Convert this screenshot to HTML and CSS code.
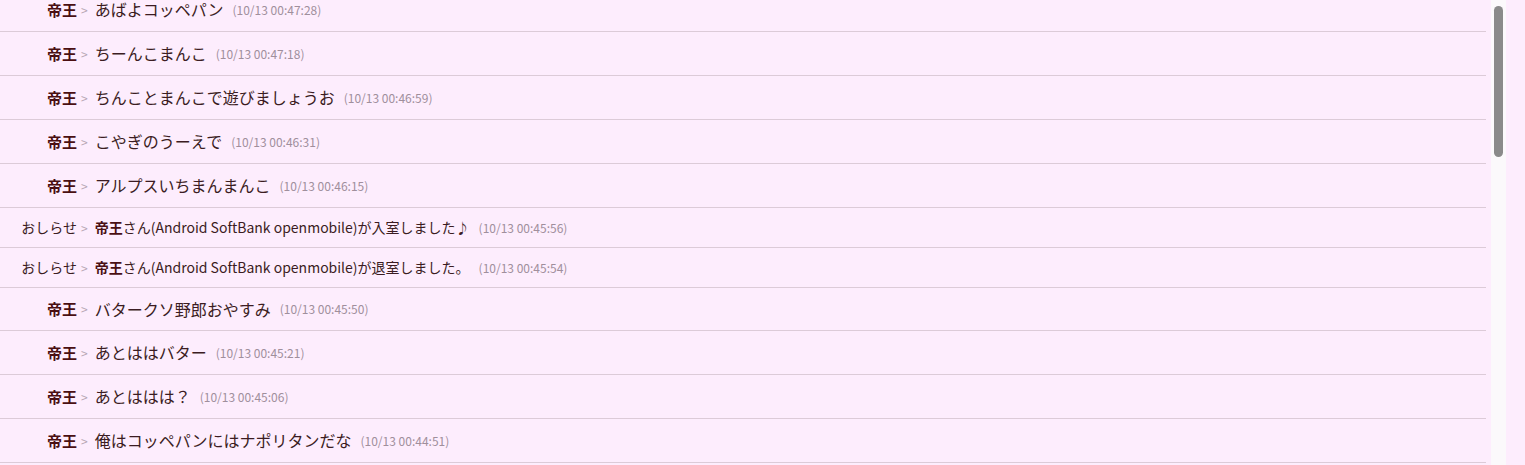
FILE: index.html
```html
<!DOCTYPE html>
<html lang="ja">
<head>
<meta charset="utf-8">
<link rel="stylesheet" href="styles.css">
</head>
<body>
<div class="frame">
  <div class="log">
    <ul class="list">
      <li class="row"><span class="name">帝王</span><span class="sep">&gt;</span><span class="msg">あばよコッペパン</span><span class="time">(10/13 00:47:28)</span></li>
      <li class="row"><span class="name">帝王</span><span class="sep">&gt;</span><span class="msg">ちーんこまんこ</span><span class="time">(10/13 00:47:18)</span></li>
      <li class="row"><span class="name">帝王</span><span class="sep">&gt;</span><span class="msg">ちんことまんこで遊びましょうお</span><span class="time">(10/13 00:46:59)</span></li>
      <li class="row"><span class="name">帝王</span><span class="sep">&gt;</span><span class="msg">こやぎのうーえで</span><span class="time">(10/13 00:46:31)</span></li>
      <li class="row"><span class="name">帝王</span><span class="sep">&gt;</span><span class="msg">アルプスいちまんまんこ</span><span class="time">(10/13 00:46:15)</span></li>
      <li class="row notice"><span class="name">おしらせ</span><span class="sep">&gt;</span><span class="msg"><b class="who">帝王</b>さん(Android SoftBank openmobile)が入室しました♪</span><span class="time">(10/13 00:45:56)</span></li>
      <li class="row notice"><span class="name">おしらせ</span><span class="sep">&gt;</span><span class="msg"><b class="who">帝王</b>さん(Android SoftBank openmobile)が退室しました。</span><span class="time">(10/13 00:45:54)</span></li>
      <li class="row after-notice"><span class="name">帝王</span><span class="sep">&gt;</span><span class="msg">バタークソ野郎おやすみ</span><span class="time">(10/13 00:45:50)</span></li>
      <li class="row"><span class="name">帝王</span><span class="sep">&gt;</span><span class="msg">あとははバター</span><span class="time">(10/13 00:45:21)</span></li>
      <li class="row"><span class="name">帝王</span><span class="sep">&gt;</span><span class="msg">あとははは？</span><span class="time">(10/13 00:45:06)</span></li>
      <li class="row"><span class="name">帝王</span><span class="sep">&gt;</span><span class="msg">俺はコッペパンにはナポリタンだな</span><span class="time">(10/13 00:44:51)</span></li>
    </ul>
  </div>
  <div class="track"><div class="thumb"></div></div>
</div>
</body>
</html>
```
FILE: styles.css
```css
html, body {
  margin: 0;
  padding: 0;
  background: #fdedfd;
  height: 465px;
  overflow: hidden;
}
body {
  font-family: "Noto Sans CJK JP", "Noto Sans", sans-serif;
  color: #3b1c22;
}
.frame {
  display: flex;
  width: 1506px;
  height: 465px;
}
.log {
  flex: 0 0 1486px;
  height: 465px;
  overflow: hidden;
}
.list {
  list-style: none;
  margin: -12px 0 0 0;
  padding: 0;
}
.row {
  display: flex;
  align-items: center;
  height: 42px;
  padding-bottom: 1px;
  border-bottom: 1px solid #dccbd8;
  white-space: nowrap;
}
.row.notice {
  height: 38px;
}
.row.after-notice {
  height: 41px;
}
.name {
  width: 77px;
  text-align: right;
  font-weight: bold;
  font-size: 15px;
  color: #4a0f12;
}
.notice .name {
  font-weight: normal;
  font-size: 14px;
  color: #3b1c22;
}
.sep {
  font-size: 12px;
  color: #b7a7b4;
  margin: 0 7px 0 4px;
}
.msg {
  font-size: 16px;
  color: #3b1c22;
}
.notice .msg {
  font-size: 14px;
}
.who {
  color: #4a0f12;
}
.time {
  font-size: 12px;
  color: #a08f9c;
  margin-left: 9px;
}
.track {
  margin-left: 5px;
  flex: 0 0 15px;
  height: 465px;
  background: #fbf9fb;
  position: relative;
}
.thumb {
  position: absolute;
  left: 3px;
  top: 6px;
  width: 9px;
  height: 151px;
  border-radius: 5px;
  background: #8a8a8a;
}
```
